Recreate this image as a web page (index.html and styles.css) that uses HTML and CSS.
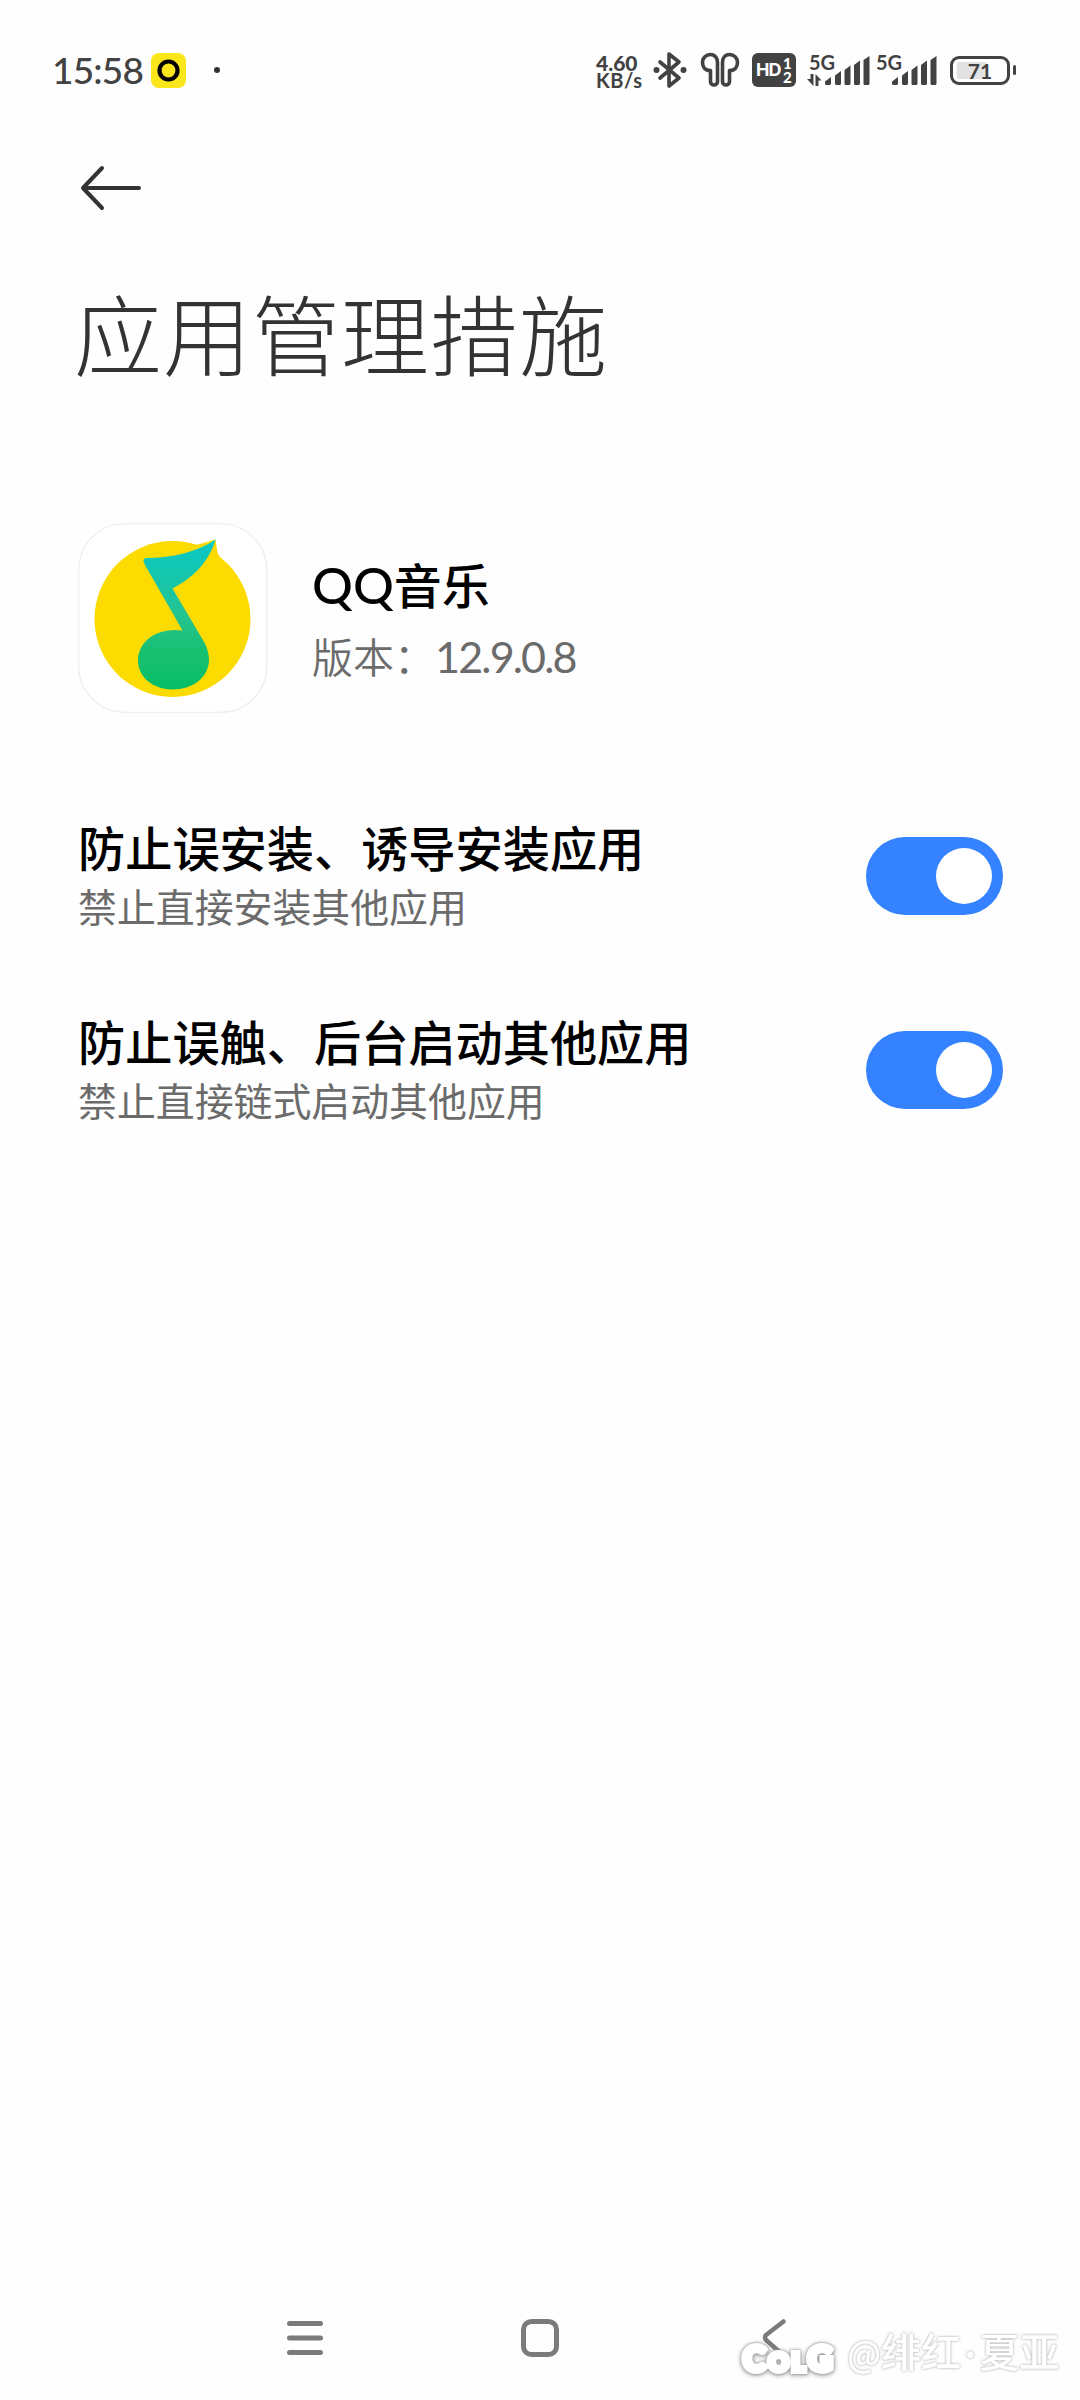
FILE: index.html
```html
<!DOCTYPE html>
<html lang="zh-CN">
<head>
<meta charset="utf-8">
<title>应用管理措施</title>
<link rel="stylesheet" href="styles.css">
</head>
<body>
<div class="screen">
  <header class="status">
    <span class="time">15:58</span>
    <svg class="badge" width="35" height="35" viewBox="0 0 35 35"><rect width="35" height="35" rx="8" fill="#fbe51b"/><circle cx="17.5" cy="17.5" r="9" fill="none" stroke="#000" stroke-width="4.2"/></svg>
    <svg class="dot" width="6" height="6"><circle cx="3" cy="3" r="3" fill="#333"/></svg>
    <div class="speed"><span class="speed-num">4.60</span><span class="speed-unit">KB/s</span></div>
    <svg class="bluetooth" width="34" height="38" viewBox="0 0 34 38" fill="none" stroke="#424242" stroke-width="3.6" stroke-linejoin="round" stroke-linecap="round"><path d="M7 11 26 27 16 35V3L26 11 7 27"/><circle cx="3.5" cy="19" r="3" fill="#424242" stroke="none"/><circle cx="30.5" cy="19" r="3" fill="#424242" stroke="none"/></svg>
    <svg class="buds" width="40" height="36" viewBox="0 0 40 36" fill="none" stroke="#424242" stroke-width="3.6" stroke-linejoin="round"><path d="M10.500 18.500C5 18.500 2.500 15 2.500 10.500C2.500 6 6 2.500 10.500 2.500C15 2.500 17.500 6 17.500 10.500V29.500a3.500 3.500 0 0 1-7 0Z"/><path d="M29.500 18.500C35 18.500 37.500 15 37.500 10.500C37.500 6 34 2.500 29.500 2.500C25 2.500 22.500 6 22.500 10.500V29.500a3.500 3.500 0 0 0 7 0Z"/></svg>
    <div class="hd"><span class="hd-name">HD</span><span class="hd-sims"><span>1</span><span>2</span></span></div>
    <div class="signal signal-data">
      <span class="net">5G</span>
      <svg width="64" height="36" viewBox="0 0 64 36" fill="#424242"><path d="M4.500 22h3v12L1 27h3.500zM9.500 34V22l6 6.500h-3V34z"/><path d="M19 31.500V29.500L25 25V31.500q0 1.500-1.500 1.500h-3q-1.500 0-1.500-1.500zM29 31.500V23.500L35 19V31.500q0 1.500-1.500 1.500h-3q-1.500 0-1.500-1.500zM38.500 31.500V18L44.500 13.500V31.500q0 1.500-1.500 1.500h-3q-1.500 0-1.500-1.500zM48 31.500V13L54 8.500V31.500q0 1.500-1.500 1.500h-3q-1.500 0-1.500-1.500zM57.500 31.500V8L63.500 4V31.500q0 1.500-1.500 1.500h-3q-1.500 0-1.500-1.500z"/></svg>
    </div>
    <div class="signal">
      <span class="net">5G</span>
      <svg width="64" height="36" viewBox="0 0 64 36" fill="#424242"><path d="M19 31.500V29.500L25 25V31.500q0 1.500-1.500 1.500h-3q-1.500 0-1.500-1.500zM29 31.500V23.500L35 19V31.500q0 1.500-1.500 1.500h-3q-1.500 0-1.500-1.500zM38.500 31.500V18L44.500 13.500V31.500q0 1.500-1.500 1.500h-3q-1.500 0-1.500-1.500zM48 31.500V13L54 8.500V31.500q0 1.500-1.500 1.500h-3q-1.500 0-1.500-1.500zM57.500 31.500V8L63.500 4V31.500q0 1.500-1.500 1.500h-3q-1.500 0-1.500-1.500z"/></svg>
    </div>
    <div class="battery"><span class="battery-body">71</span><span class="battery-tip"></span></div>
  </header>

  <svg class="back" width="64" height="48" viewBox="0 0 64 48" fill="none" stroke="#333" stroke-width="4" stroke-linecap="round" stroke-linejoin="round"><path d="M60 24H4M23 4 4 24 23 44"/></svg>
  <h1 class="title">应用管理措施</h1>

  <section class="app">
    <svg class="app-icon" width="190" height="190" viewBox="0 0 190 190">
      <defs><linearGradient id="note" x1="0" y1="0" x2="0" y2="1"><stop offset="0" stop-color="#08c8c8"/><stop offset=".5" stop-color="#24c490"/><stop offset=".75" stop-color="#18c070"/><stop offset="1" stop-color="#06bd68"/></linearGradient></defs>
      <rect x=".75" y=".75" width="188" height="188.500" rx="46" fill="#fff" stroke="#ededed" stroke-width="1.200"/>
      <circle cx="94.500" cy="96" r="78" fill="#fcdb00"/><path d="M115 23 137.500 16.500 139 27Q140 33 144 36L130 48Z" fill="#fcdb00"/>
      <path d="M69 35C94 35 119 29 137.500 16.500C131 39 115 55 94.500 65.500L125.500 118Q131 127 131 138C130 155 114 166.500 95 166.500C75 166.500 60 154 60 137.500C60 119 78 104 104.500 107.500L67 42Q63 35 69 35Z" fill="url(#note)"/>
    </svg>
    <div class="app-text">
      <h2 class="app-name"><span class="latin">QQ</span>音乐</h2>
      <p class="app-version">版本：<span class="number">12.9.0.8</span></p>
    </div>
  </section>

  <main class="settings">
    <div class="row">
      <div class="row-text"><h3 class="row-title">防止误安装、诱导安装应用</h3><p class="row-note">禁止直接安装其他应用</p></div>
      <span class="switch"><span class="knob"></span></span>
    </div>
    <div class="row">
      <div class="row-text"><h3 class="row-title">防止误触、后台启动其他应用</h3><p class="row-note">禁止直接链式启动其他应用</p></div>
      <span class="switch"><span class="knob"></span></span>
    </div>
  </main>

  <nav class="nav">
    <svg width="38" height="40" viewBox="0 0 38 40" fill="none" stroke="#7b7b7b" stroke-width="5" stroke-linecap="round"><path d="M3.500 5.500h31M3.500 20h31M3.500 34.500h31"/></svg>
    <svg width="40" height="40" viewBox="0 0 40 40" fill="none" stroke="#7b7b7b" stroke-width="5"><rect x="3.500" y="3.500" width="33" height="33" rx="8"/></svg>
    <svg width="26" height="40" viewBox="0 0 26 40" fill="none" stroke="#7b7b7b" stroke-width="4.500" stroke-linecap="round" stroke-linejoin="round"><path d="M22.500 3.500 5 17Q3 19.500 5 22L22 37"/></svg>
  </nav>
  <div class="watermark"><span class="brand"><span class="c">C</span><span class="o">O</span><span class="l">L</span><span class="g">G</span></span><span class="author"><span class="at">@</span>绯红<span class="mid">·</span>夏亚</span></div>
</div>
</body>
</html>
```
FILE: styles.css
```css
* { box-sizing: border-box; }
body {
  margin: 0;
  background: #fefefe;
  font-family: "Noto Sans CJK SC", sans-serif;
}
h1, h2, h3, p { margin: 0; font-weight: 400; white-space: nowrap; }
svg { display: block; flex: none; }
.screen {
  position: relative;
  width: 1080px;
  height: 2400px;
  overflow: hidden;
  display: flex;
  flex-direction: column;
}
.status {
  height: 140px;
  padding-left: 52px;
  display: flex;
  align-items: center;
  color: #424242;
  flex: none;
}
.time {
  width: 99px;
  font: 500 37px/40px Lato, sans-serif;
  letter-spacing: -.8px;
  white-space: nowrap;
}
.dot { margin-left: 28px; }
.speed {
  width: 57px;
  margin-left: 376px;
  display: flex;
  flex-direction: column;
  font: 900 21px/17px Lato, sans-serif;
  padding-top: 2px;
}
.speed-unit { font-size: 20px; font-weight: 700; line-height: 18px; letter-spacing: .6px; }
.buds { margin-left: 13px; }
.hd {
  width: 44px;
  height: 34px;
  margin-left: 12px;
  padding-left: 4px;
  display: flex;
  align-items: center;
  border-radius: 6px;
  background: #424242;
  color: #fff;
  font: 700 18px/32px Inter, sans-serif;
}
.hd-name { width: 27px; letter-spacing: -1px; }
.hd-sims { display: flex; flex-direction: column; font: 900 15px/14px Lato, sans-serif; }
.signal { position: relative; width: 64px; margin-left: 3px; }
.signal-data { margin-left: 10px; }
.net {
  position: absolute;
  left: 3px;
  top: 0;
  font: 700 20px/20px Lato, sans-serif;
}
.battery { display: flex; align-items: center; gap: 3px; margin-left: 13px; }
.battery-body {
  width: 60px;
  height: 29px;
  border: 3px solid #424242;
  border-radius: 9px;
  background: linear-gradient(#e2e2e2, #e2e2e2) 4px 3px / 29px 17px no-repeat;
  font: 700 21px/23px Lato, sans-serif;
  text-align: center;
}
.battery-tip { width: 3px; height: 10px; border-radius: 2px; background: #424242; }
.back { margin: 24px 0 0 79px; }
.title {
  margin: 55px 0 0 74px;
  font-size: 88px;
  line-height: 128px;
  font-weight: 300;
  letter-spacing: 1px;
  color: #333;
}
.app { display: flex; margin: 128px 0 0 78px; height: 190px; }
.app-text { padding: 25px 0 0 44px; }
.app-name { font-size: 48px; line-height: 70px; font-weight: 500; color: #000; }
.latin { font-family: Lato, sans-serif; font-size: 51px; }
.app-version { font-size: 41px; line-height: 70px; color: #6b6b6b; font-weight: 350; }
.number { font-family: Lato, sans-serif; font-size: 43px; font-weight: 400; letter-spacing: -1.800px; }
.settings { padding: 102px 77px 0 78px; display: flex; flex-direction: column; gap: 79px; }
.row { display: flex; justify-content: space-between; height: 114.500px; }
.row-text { margin-top: -2px; }
.row-title { font-size: 47.200px; line-height: 68px; font-weight: 500; color: #000; }
.row-note { font-size: 38.900px; line-height: 48px; color: #6b6b6b; }
.switch {
  width: 137px;
  height: 78px;
  margin-top: 22px;
  padding: 11px;
  display: flex;
  justify-content: flex-end;
  border-radius: 39px;
  background: #3482ff;
}
.knob { width: 56px; height: 56px; border-radius: 50%; background: #fff; }
.nav {
  margin-top: auto;
  height: 124px;
  padding: 42px 0 0 286px;
  display: grid;
  grid-template-columns: 234px 241px 26px;
}
.watermark {
  position: absolute;
  left: 740px;
  top: 2325px;
  display: flex;
  height: 50px;
  white-space: nowrap;
}
.brand {
  width: 107px;
  padding-top: 12px;
  display: flex;
  align-items: baseline;
  color: #fff;
  font: 900 34px/42px Lato, sans-serif;
  -webkit-text-stroke: 6px #fff;
  filter: drop-shadow(0 0 1px #999) drop-shadow(0 1px 2px #999);
}
.brand .o, .brand .l { font-size: 25px; }
.brand span { margin-left: 3px; }
.author {
  color: #fff;
  font-size: 40px;
  line-height: 50px;
  font-weight: 500;
  filter: drop-shadow(0 0 1px #bbb) drop-shadow(0 0 1px #ddd);
}
.at { font-size: 35px; }
.mid { font-family: Lato, sans-serif; margin: 0 4px; }
```
